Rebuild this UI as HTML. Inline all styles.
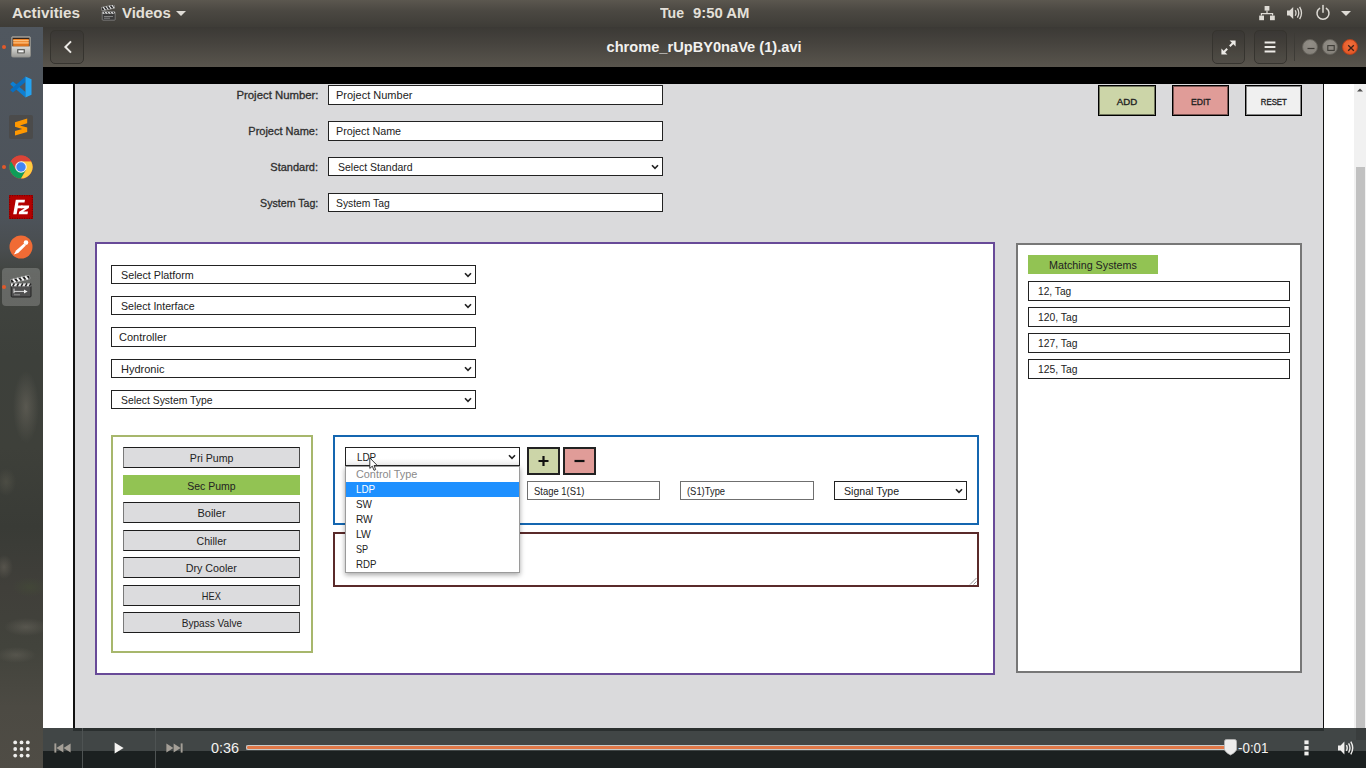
<!DOCTYPE html>
<html><head><meta charset="utf-8"><title>Videos</title>
<style>
*{box-sizing:border-box;margin:0;padding:0}
html,body{width:1366px;height:768px;overflow:hidden;background:#000;font-family:"Liberation Sans",sans-serif}
.abs{position:absolute}
.t{display:inline-block;white-space:nowrap}
#topbar{position:absolute;left:0;top:0;width:1366px;height:27px;background:linear-gradient(#5b574f,#4b4842 40%,#3e3c37);color:#e4e0d9;font-weight:bold;font-size:14.5px}
#topbar .tx{position:absolute;top:5px;white-space:nowrap}
#topbar svg,#header svg,#dock svg,#ctrl svg{position:absolute;display:block}
#dock{position:absolute;left:0;top:27px;width:43px;height:741px;background:
radial-gradient(ellipse 13px 36px at 26px 380px,rgba(112,108,98,.55),rgba(112,108,98,0) 100%),
radial-gradient(ellipse 9px 12px at 4px 540px,rgba(110,105,95,.5),rgba(110,105,95,0) 100%),
radial-gradient(ellipse 10px 14px at 6px 455px,rgba(100,98,85,.4),rgba(100,98,85,0) 100%),
radial-gradient(ellipse 22px 9px at 26px 600px,rgba(120,116,106,.4),rgba(120,116,106,0) 100%),
radial-gradient(ellipse 20px 8px at 16px 628px,rgba(120,116,106,.35),rgba(120,116,106,0) 100%),
radial-gradient(ellipse 18px 10px at 30px 560px,rgba(70,84,52,.35),rgba(70,84,52,0) 100%),
linear-gradient(#50575f 0,#4d535a 190px,#494d4f 222px,#414440 246px,#3d403b 330px,#3e403a 420px,#393b36 500px,#403f3a 560px,#42433c 620px,#4c4a43 680px,#4f4c45 741px)}
#header{position:absolute;left:43px;top:27px;width:1323px;height:40px;background:linear-gradient(#3b3935,#46433e 40%,#59554d);color:#f2f1ef}
#title{position:absolute;left:0;width:1323px;top:11px;text-align:center;font-weight:bold;font-size:15px}
.hbtn{position:absolute;top:3px;width:33px;height:34px;border:1px solid #36342f;border-radius:5px;background:rgba(0,0,0,.05)}
.wb{position:absolute;top:12px;width:16px;height:16px;border-radius:50%;background:radial-gradient(circle at 50% 30%,#928e87,#827e77);border:1px solid #66635c}
.dot{position:absolute;left:2px;width:4px;height:4px;border-radius:50%;background:#e2592a}
#video{position:absolute;left:43px;top:67px;width:1323px;height:701px;background:#000;overflow:hidden}
#page{position:absolute;left:0;top:17px;width:1311px;height:684px;background:#fff}
#gray{position:absolute;left:30px;top:0;width:1251px;height:646px;background:#dadadc;border:2px solid #111;border-top:none;border-right-width:1px}
#sb{position:absolute;left:1311px;top:17px;width:12px;height:684px;background:#f1f1f1}
#sbthumb{position:absolute;left:2px;top:83px;width:9px;height:600px;background:#c1c1c1}
.app{font-family:"Liberation Sans",sans-serif;font-size:11px;color:#222}
.lbl{position:absolute;width:200px;text-align:right;font-size:11px;color:#2e2e2e;-webkit-text-stroke:.3px #2e2e2e}
.inp{position:absolute;background:#fff;border:1px solid #222;font-size:11px;color:#222;padding-left:7px;white-space:nowrap;overflow:hidden}
.sel{padding-left:9px}
.lt{border-color:#6f6f6f;padding-left:6px}
.chev{position:absolute;right:3px;top:50%;margin-top:-3px;width:8px;height:6px}
.btn{position:absolute;border:1px solid #333;border-color:#1c1c1c #4a4a4a #1c1c1c #7a7a7a;background:#dcdcde;text-align:center;font-size:11px;color:#222}
#ctrl{position:absolute;left:0;top:661px;width:1323px;height:40px;background:#1b2020}
.ctx{font-size:15px;color:#f4f3f1;white-space:nowrap;line-height:20px}
.opt{height:15px;line-height:15px;padding-left:10px}
.ms{padding-left:9px}
#ctrl .top{position:absolute;left:0;top:0;width:1323px;height:23px;background:#414646}
</style></head>
<body>
<div id="topbar">
 <div class="tx" style="left:12px"><span class="t" style="transform:scaleX(1.055);transform-origin:0 50%">Activities</span></div>
 <svg style="left:101px;top:5px" width="15" height="16" viewBox="0 0 15 16">
  <g transform="rotate(-12 2 6)"><rect x="1" y="2.2" width="13" height="3.4" fill="#2b2b2b" stroke="#bdbdbd" stroke-width=".5"/><path d="M3 2.2l1.5 3.4M6 2.2l1.5 3.4M9 2.2l1.5 3.4M12 2.2l1.5 3.4" stroke="#e8e8e8" stroke-width="1.1"/></g>
  <rect x="1.2" y="6.6" width="13" height="8.6" rx=".8" fill="#3a3a3a" stroke="#9a9a9a" stroke-width=".6"/>
  <rect x="1.5" y="6.9" width="12.4" height="2" fill="#d0d0d0"/><path d="M3 6.9l1.3 2M6 6.9l1.3 2M9 6.9l1.3 2M12 6.9l1.3 2" stroke="#333" stroke-width="1"/>
  <path d="M3 11.5h9M3 13.2h6" stroke="#8a8a8a" stroke-width=".9"/>
 </svg>
 <div class="tx" style="left:122px"><span class="t" style="transform:scaleX(1.030);transform-origin:0 50%">Videos</span></div>
 <svg style="left:176px;top:11px" width="10" height="5" viewBox="0 0 10 5"><path d="M0 0h10L5 5z" fill="#dedbd5"/></svg>
 <div class="tx" style="left:660px"><span class="t" style="transform:scaleX(0.972);transform-origin:0 50%">Tue</span></div>
 <div class="tx" style="left:693px"><span class="t" style="transform:scaleX(1.026);transform-origin:0 50%">9:50 AM</span></div>
 <svg style="left:1259px;top:5px" width="16" height="17" viewBox="0 0 16 17" fill="#dedbd5"><rect x="5.6" y="1" width="4.8" height="4.6"/><rect x=".2" y="10.6" width="4.8" height="4.6"/><rect x="11" y="10.6" width="4.8" height="4.6"/><path d="M7.4 5.6h1.2v2.4h5.6v2.6H13V9.2H3v1.4H1.8V8h5.6z"/></svg>
 <svg style="left:1286px;top:5px" width="17" height="16" viewBox="0 0 17 16"><path d="M1 5.6h2.6L7.2 2v12L3.6 10.4H1z" fill="#dedbd5"/><path d="M9.2 5.2q1.6 2.8 0 5.6M11.4 3.4q2.8 4.6 0 9.2M13.6 1.8q3.8 6.2 0 12.4" fill="none" stroke="#dedbd5" stroke-width="1.3"/></svg>
 <svg style="left:1315px;top:4px" width="16" height="17" viewBox="0 0 16 17" fill="none" stroke="#dedbd5" stroke-width="1.5" stroke-linecap="round"><path d="M4.6 4.4a6 6 0 1 0 6.8 0"/><path d="M8 1.6v6.6"/></svg>
 <svg style="left:1341px;top:11px" width="10" height="5" viewBox="0 0 10 5"><path d="M0 0h10L5 5z" fill="#dedbd5"/></svg>
</div>
<div id="dock">
 <div class="abs" style="left:2px;top:241px;width:38px;height:38px;border-radius:4px;background:rgba(255,255,255,.2)"></div>
 <div class="dot" style="top:18px"></div><div class="dot" style="top:138px"></div><div class="dot" style="top:258px"></div>
 <!-- files -->
 <svg style="left:11px;top:9px" width="20" height="22" viewBox="0 0 20 22"><defs><linearGradient id="fg" x1="0" y1="0" x2="0" y2="1"><stop offset="0" stop-color="#dcdcd9"/><stop offset="1" stop-color="#9c9c98"/></linearGradient></defs><rect x=".5" y=".5" width="19" height="20.500" rx="1.600" fill="url(#fg)" stroke="#8e8e8a"/><rect x="1.400" y="1.500" width="17.200" height="9" fill="#33241a"/><rect x="2.200" y="3" width="15.600" height="7.500" fill="#ef8427"/><path d="M2.200 4.700h15.600M2.200 6.900h15.600" stroke="#ffd6a2" stroke-width=".9"/><path d="M2.200 9h15.600" stroke="#c45f12" stroke-width=".8"/><rect x="1" y="10.600" width="18" height="10" fill="url(#fg)"/><rect x="6" y="13" width="8" height="4.600" rx=".8" fill="#63635f"/><rect x="7.400" y="14.300" width="5.200" height="2" fill="#f6f6f6"/></svg>
 <!-- vscode -->
 <svg style="left:10px;top:49px" width="22" height="22" viewBox="0 0 22 22"><path d="M15.500 21.500L15.500 16L2.900 5.600L.5 7.600L.5 8.400z" fill="#0d7fd3"/><path d="M15.500.5L15.500 6L2.900 16.400L.5 14.400L.5 13.600z" fill="#0a6fc0"/><path d="M15.500.5L21.500 3.300V18.700L15.500 21.500z" fill="#25a3f1"/></svg>
 <!-- sublime -->
 <svg style="left:9px;top:88px" width="24" height="24" viewBox="0 0 24 24"><rect width="24" height="24" rx="2" fill="#4b4b4b"/><path d="M6 8.200L18.200 4.600v4.600L11 11.400l7.200 2.100v4.600L6 21.600v-4.600l7.200-2.100L6 12.800z" fill="#ff9800" transform="translate(0 -1)"/></svg>
 <!-- chrome -->
 <svg style="left:9px;top:128px" width="24" height="24" viewBox="0 0 24 24"><circle cx="12" cy="12" r="11.6" fill="#db4437"/><path d="M12 12L1.95 6.2A11.6 11.6 0 0 0 12 23.6L17 15z" fill="#0f9d58"/><path d="M12 12l5 3l-5 8.600A11.6 11.6 0 0 0 22.050 6.200H12z" fill="#ffcd40"/><path d="M12 6.2h10.050A11.6 11.6 0 0 0 1.950 6.200L7 15z" fill="#db4437"/><circle cx="12" cy="12" r="5.800" fill="#f1f1f1"/><circle cx="12" cy="12" r="4.700" fill="#4285f4"/></svg>
 <!-- filezilla -->
 <svg style="left:9px;top:168px" width="24" height="24" viewBox="0 0 24 24"><rect width="24" height="24" fill="#b30000"/><rect x=".6" y=".6" width="22.800" height="22.800" fill="none" stroke="#7c0000" stroke-width="1.200" stroke-dasharray="1.200 1.200"/><path d="M4.200 19.200L6.800 4.800h9.200l-.5 2.800h-6l-.5 3h4.600l-.5 2.700H8.700l-1.100 5.900z" fill="#fff"/><path d="M12.200 10.600h8l-.4 2.400l-5.600 3.600h4.800l-.5 2.600h-8.800l.4-2.400l5.600-3.600h-4z" fill="#fff"/></svg>
 <!-- postman -->
 <svg style="left:9px;top:208px" width="24" height="24" viewBox="0 0 24 24"><circle cx="12" cy="12" r="11.500" fill="#f06b35"/><path d="M5.400 19.200l1.400-3.400L15 8.600l1.800 1.800l-7.600 7.600z" fill="#fff"/><circle cx="17" cy="7.600" r="2.300" fill="#fff"/><path d="M5 19.600l1.200-2l.9.900z" fill="#fff"/></svg>
 <!-- totem -->
 <svg style="left:10px;top:247px" width="22" height="24" viewBox="0 0 22 24"><g transform="rotate(-13 2 10)"><rect x="1.400" y="5.400" width="19.400" height="3.600" rx=".6" fill="#1e1e1e" stroke="#d8d8d8" stroke-width=".5"/><path d="M4 5.400l1.800 3.600M8.200 5.400l1.800 3.600M12.400 5.400l1.800 3.600M16.600 5.400l1.800 3.600" stroke="#f4f4f4" stroke-width="2"/></g><rect x="1.200" y="9.600" width="19.800" height="13.400" rx="1" fill="#505050" stroke="#1c1c1c" stroke-width=".9"/><rect x="1" y="9.300" width="20.200" height="3" fill="#ececec"/><path d="M4.400 9.300l-1.600 3M8.600 9.300l-1.600 3M12.800 9.300l-1.600 3M17 9.300l-1.600 3M21 9.300l-1.600 3" stroke="#262626" stroke-width="1.600"/><path d="M4 14.600v4.600M4 17.400h11" stroke="#dcdcdc" stroke-width="1"/><path d="M4 20.800h6" stroke="#9a9a9a" stroke-width=".9"/><path d="M14 15.400l3.600 2L14 19.400z" fill="#f0f0f0"/></svg>
 <!-- apps grid -->
 <svg style="left:13px;top:713px" width="17" height="18" viewBox="0 0 17 18" fill="#eeeeec"><circle cx="2.200" cy="2.400" r="1.900"/><circle cx="8.500" cy="2.400" r="1.900"/><circle cx="14.800" cy="2.400" r="1.900"/><circle cx="2.200" cy="9" r="1.900"/><circle cx="8.500" cy="9" r="1.900"/><circle cx="14.800" cy="9" r="1.900"/><circle cx="2.200" cy="15.600" r="1.900"/><circle cx="8.500" cy="15.600" r="1.900"/><circle cx="14.800" cy="15.600" r="1.900"/></svg>
</div>
<div id="header">
 <div class="hbtn" style="left:7px;width:34px"></div>
 <svg style="left:20px;top:13px" width="10" height="14" viewBox="0 0 10 14"><path d="M8 1.400L2.400 7L8 12.600" fill="none" stroke="#eceae6" stroke-width="2"/></svg>
 <div id="title"><span class="t" style="transform:scaleX(0.975);transform-origin:50% 50%">chrome_rUpBY0naVe (1).avi</span></div>
 <div class="hbtn" style="left:1169px"></div>
 <svg style="left:1178px;top:13px" width="15" height="15" viewBox="0 0 15 15"><path d="M14.600.4v6L8.600.4zM.4 14.600v-6l6 6z" fill="#eceae6"/><path d="M12 3L8.800 6.200M3 12l3.200-3.200" stroke="#eceae6" stroke-width="2"/></svg>
 <div class="hbtn" style="left:1211px"></div>
 <svg style="left:1221px;top:14px" width="12" height="12" viewBox="0 0 12 12"><path d="M.6 1.600h10.800M.6 6h10.800M.6 10.400h10.800" stroke="#eceae6" stroke-width="2"/></svg>
 <div class="abs" style="left:1251px;top:6px;width:1px;height:28px;background:#3d3b36"></div>
 <div class="wb" style="left:1259px"><svg style="left:4px;top:4px" width="8" height="8" viewBox="0 0 8 8"><path d="M.5 4.500h7" stroke="#3d3b36" stroke-width="1.200"/></svg></div>
 <div class="wb" style="left:1279px"><svg style="left:4px;top:4px" width="8" height="8" viewBox="0 0 8 8"><rect x=".8" y="1.600" width="6.400" height="4.800" fill="none" stroke="#3d3b36" stroke-width="1.100"/></svg></div>
 <div class="wb" style="left:1299px;background:radial-gradient(circle at 50% 35%,#f0703c,#e14f1f);border-color:#b8431c"><svg style="left:4px;top:4px" width="8" height="8" viewBox="0 0 8 8"><path d="M1.200 1.200l5.600 5.600M6.800 1.200L1.200 6.800" stroke="#3b2018" stroke-width="1.300"/></svg></div>
</div>
<div id="video">
 <div id="page" class="app">
  <div id="gray"></div>
  <div id="c" style="position:absolute;left:-43px;top:-84px;width:1366px;height:768px">
   <div class="lbl" style="left:118px;top:89px"><span class="t" style="transform:scaleX(1.032);transform-origin:100% 50%">Project Number:</span></div>
   <div class="inp" style="left:328px;top:85px;width:335px;height:20px;line-height:18px"><span class="t">Project Number</span></div>
   <div class="lbl" style="left:118px;top:125px"><span class="t">Project Name:</span></div>
   <div class="inp" style="left:328px;top:121px;width:335px;height:20px;line-height:18px"><span class="t" style="transform:scaleX(0.977);transform-origin:0 50%">Project Name</span></div>
   <div class="lbl" style="left:118px;top:161px"><span class="t">Standard:</span></div>
   <div class="inp sel" style="left:328px;top:157px;width:335px;height:19px;line-height:18px"><span class="t" style="transform:scaleX(0.954);transform-origin:0 50%">Select Standard</span><svg class="chev" viewBox="0 0 8 6"><path d="M1 1.2 L4 4.4 L7 1.2" fill="none" stroke="#222" stroke-width="1.6"/></svg></div>
   <div class="lbl" style="left:118px;top:197px"><span class="t" style="transform:scaleX(0.965);transform-origin:100% 50%">System Tag:</span></div>
   <div class="inp" style="left:328px;top:193px;width:335px;height:19px;line-height:18px"><span class="t" style="transform:scaleX(0.939);transform-origin:0 50%">System Tag</span></div>

   <div class="btn" style="left:1098px;top:85px;width:58px;height:31px;line-height:32px;background:#ccd5a8;font-size:9.5px;-webkit-text-stroke:.35px #222;border:1px solid #000;box-shadow:inset 0 0 0 1px rgba(0,0,0,.45)"><span class="t" style="transform:scaleX(1.017);transform-origin:50% 50%">ADD</span></div>
   <div class="btn" style="left:1172px;top:85px;width:57px;height:31px;line-height:32px;background:#e09c98;font-size:9.5px;-webkit-text-stroke:.35px #222;border:1px solid #000;box-shadow:inset 0 0 0 1px rgba(0,0,0,.45)"><span class="t" style="transform:scaleX(0.906);transform-origin:50% 50%">EDIT</span></div>
   <div class="btn" style="left:1245px;top:85px;width:57px;height:31px;line-height:32px;background:#f0f0f0;font-size:9.5px;-webkit-text-stroke:.35px #222;border:1px solid #000;box-shadow:inset 0 0 0 1px rgba(0,0,0,.45)"><span class="t" style="transform:scaleX(0.821);transform-origin:50% 50%">RESET</span></div>

   <div class="abs" style="left:95px;top:242px;width:900px;height:433px;background:#fff;border:2px solid #684a98"></div>
   <div class="inp sel" style="left:111px;top:265px;width:365px;height:19px;line-height:18px"><span class="t" style="transform:scaleX(0.976);transform-origin:0 50%">Select Platform</span><svg class="chev" viewBox="0 0 8 6"><path d="M1 1.2 L4 4.4 L7 1.2" fill="none" stroke="#222" stroke-width="1.6"/></svg></div>
   <div class="inp sel" style="left:111px;top:296px;width:365px;height:19px;line-height:18px"><span class="t" style="transform:scaleX(0.963);transform-origin:0 50%">Select Interface</span><svg class="chev" viewBox="0 0 8 6"><path d="M1 1.2 L4 4.4 L7 1.2" fill="none" stroke="#222" stroke-width="1.6"/></svg></div>
   <div class="inp" style="left:111px;top:327px;width:365px;height:20px;line-height:18px"><span class="t">Controller</span></div>
   <div class="inp sel" style="left:111px;top:359px;width:365px;height:19px;line-height:18px"><span class="t">Hydronic</span><svg class="chev" viewBox="0 0 8 6"><path d="M1 1.2 L4 4.4 L7 1.2" fill="none" stroke="#222" stroke-width="1.6"/></svg></div>
   <div class="inp sel" style="left:111px;top:390px;width:365px;height:19px;line-height:18px"><span class="t" style="transform:scaleX(0.943);transform-origin:0 50%">Select System Type</span><svg class="chev" viewBox="0 0 8 6"><path d="M1 1.2 L4 4.4 L7 1.2" fill="none" stroke="#222" stroke-width="1.6"/></svg></div>

   <div class="abs" style="left:111px;top:435px;width:202px;height:218px;border:2px solid #a7b76c;background:#fff"></div>
   <div class="btn eq" style="left:123px;top:447px;width:177px;height:21px;line-height:20px"><span class="t" style="transform:scaleX(0.964);transform-origin:50% 50%">Pri Pump</span></div>
   <div class="btn eq" style="left:123px;top:475px;width:177px;height:20px;line-height:20px;background:#92c353;border-color:#92c353"><span class="t" style="transform:scaleX(0.952);transform-origin:50% 50%">Sec Pump</span></div>
   <div class="btn eq" style="left:123px;top:502px;width:177px;height:21px;line-height:20px"><span class="t">Boiler</span></div>
   <div class="btn eq" style="left:123px;top:530px;width:177px;height:21px;line-height:20px"><span class="t" style="transform:scaleX(0.962);transform-origin:50% 50%">Chiller</span></div>
   <div class="btn eq" style="left:123px;top:557px;width:177px;height:21px;line-height:20px"><span class="t" style="transform:scaleX(0.974);transform-origin:50% 50%">Dry Cooler</span></div>
   <div class="btn eq" style="left:123px;top:585px;width:177px;height:21px;line-height:20px"><span class="t" style="transform:scaleX(0.840);transform-origin:50% 50%">HEX</span></div>
   <div class="btn eq" style="left:123px;top:612px;width:177px;height:21px;line-height:20px"><span class="t" style="transform:scaleX(0.918);transform-origin:50% 50%">Bypass Valve</span></div>

   <div class="abs" style="left:333px;top:435px;width:646px;height:90px;border:2px solid #1466b0;background:#fff"></div>
   <div class="inp sel" style="left:345px;top:447px;width:175px;height:19px;line-height:18px;padding-left:11px;background:linear-gradient(#fff 60%,#efefef)"><span class="t" style="transform:scaleX(0.897);transform-origin:0 50%">LDP</span><svg class="chev" viewBox="0 0 8 6"><path d="M1 1.2 L4 4.4 L7 1.2" fill="none" stroke="#222" stroke-width="1.6"/></svg></div>
   <div class="btn" style="left:527px;top:447px;width:33px;height:28px;background:#ccd5a8;border-width:2px;border-color:#222"><svg width="29" height="24" viewBox="0 1 29 24"><path d="M9.5 13h10M14.5 8v10" stroke="#111" stroke-width="2.2"/></svg></div>
   <div class="btn" style="left:563px;top:447px;width:33px;height:28px;background:#e09c98;border-width:2px;border-color:#222"><svg width="29" height="24" viewBox="0 1 29 24"><path d="M9.5 13h10" stroke="#111" stroke-width="2.2"/></svg></div>
   <div class="inp lt" style="left:527px;top:481px;width:133px;height:19px;line-height:18px"><span class="t" style="transform:scaleX(0.857);transform-origin:0 50%">Stage 1(S1)</span></div>
   <div class="inp lt" style="left:680px;top:481px;width:134px;height:19px;line-height:18px"><span class="t" style="transform:scaleX(0.853);transform-origin:0 50%">(S1)Type</span></div>
   <div class="inp sel" style="left:834px;top:481px;width:133px;height:19px;line-height:18px"><span class="t" style="transform:scaleX(0.962);transform-origin:0 50%">Signal Type</span><svg class="chev" viewBox="0 0 8 6"><path d="M1 1.2 L4 4.4 L7 1.2" fill="none" stroke="#222" stroke-width="1.6"/></svg></div>

   <div class="abs" style="left:333px;top:532px;width:646px;height:55px;border:2px solid #5a2a2a;background:#fff"></div>
   <svg class="abs" style="left:969px;top:577px" width="8" height="8" viewBox="0 0 8 8"><path d="M7.500 1L1 7.500M7.500 4.500L4.500 7.500" stroke="#8a8a8a" stroke-width=".9"/></svg>

   <div class="abs" id="dd" style="left:345px;top:466px;width:175px;height:107px;background:#fff;border:1px solid #9a9a9a;box-shadow:0 2px 5px rgba(0,0,0,.35);font-size:11px;color:#222">
    <div class="opt" style="color:#8a8a8a"><span class="t" style="transform:scaleX(0.986);transform-origin:0 50%">Control Type</span></div>
    <div class="opt" style="background:#1e90ff;color:#fff"><span class="t" style="transform:scaleX(0.897);transform-origin:0 50%">LDP</span></div>
    <div class="opt"><span class="t" style="transform:scaleX(0.902);transform-origin:0 50%">SW</span></div>
    <div class="opt"><span class="t" style="transform:scaleX(0.915);transform-origin:0 50%">RW</span></div>
    <div class="opt"><span class="t" style="transform:scaleX(0.943);transform-origin:0 50%">LW</span></div>
    <div class="opt"><span class="t" style="transform:scaleX(0.831);transform-origin:0 50%">SP</span></div>
    <div class="opt"><span class="t" style="transform:scaleX(0.878);transform-origin:0 50%">RDP</span></div>
   </div>

   <svg class="abs" style="left:369px;top:457px" width="10" height="15" viewBox="0 0 10 15"><path d="M.8.900V11.400L3.300 9.200L5 13.300L6.700 12.600L5 8.600H8.400z" fill="#fff" stroke="#222" stroke-width=".9" stroke-linejoin="round"/></svg>
   <div class="abs" style="left:1016px;top:243px;width:286px;height:430px;border:2px solid #777;background:#fff"></div>
   <div class="abs" style="left:1028px;top:255px;width:130px;height:19px;line-height:21px;background:#92c353;text-align:center;font-size:11px;color:#222"><span class="t" style="transform:scaleX(0.975);transform-origin:50% 50%">Matching Systems</span></div>
   <div class="inp ms" style="left:1028px;top:281px;width:262px;height:20px;line-height:18px"><span class="t" style="transform:scaleX(0.925);transform-origin:0 50%">12, Tag</span></div>
   <div class="inp ms" style="left:1028px;top:307px;width:262px;height:20px;line-height:18px"><span class="t" style="transform:scaleX(0.938);transform-origin:0 50%">120, Tag</span></div>
   <div class="inp ms" style="left:1028px;top:333px;width:262px;height:20px;line-height:18px"><span class="t" style="transform:scaleX(0.938);transform-origin:0 50%">127, Tag</span></div>
   <div class="inp ms" style="left:1028px;top:359px;width:262px;height:20px;line-height:18px"><span class="t" style="transform:scaleX(0.938);transform-origin:0 50%">125, Tag</span></div>
  </div>
 </div>
 <div id="sb"><div id="sbthumb"></div><svg style="position:absolute;left:3px;top:4px" width="6" height="4" viewBox="0 0 6 4"><path d="M0 3.600L3 .4L6 3.600z" fill="#505050"/></svg></div>
 <div id="ctrl"><div class="top"></div>
  <div class="abs" style="left:1313px;top:0;width:10px;height:12px;background:rgba(0,0,0,.12)"></div>
  <div class="abs" style="left:30px;top:0;width:1251px;height:3px;background:#2a2f2f"></div>
  <div class="abs" style="left:39px;top:0;width:1px;height:40px;background:#4e5353"></div>
  <div class="abs" style="left:112px;top:0;width:1px;height:40px;background:#4e5353"></div>
  <svg style="left:11px;top:15px" width="17" height="10" viewBox="0 0 17 10" fill="#a49f97"><rect x=".4" y=".4" width="1.900" height="9.200"/><path d="M9.400.4v9.200L2.400 5z"/><path d="M16.600.4v9.200L9.600 5z"/></svg>
  <svg style="left:71px;top:14px" width="10" height="12" viewBox="0 0 10 12"><path d="M.6.6L9.600 6L.6 11.400z" fill="#f4f3f1"/></svg>
  <svg style="left:123px;top:15px" width="17" height="10" viewBox="0 0 17 10" fill="#a49f97"><rect x="14.700" y=".4" width="1.900" height="9.200"/><path d="M.4.4v9.200L7.400 5z"/><path d="M7.600.4v9.200L14.600 5z"/></svg>
  <div class="abs ctx" style="left:168px;top:10px"><span class="t" style="transform:scaleX(0.959);transform-origin:0 50%">0:36</span></div>
  <div class="abs" style="left:203px;top:17px;width:985px;height:5px;border-radius:2px;background:#e07848;border:1px solid #c8cbcb;border-right:none"></div>
  <svg style="left:1181px;top:11px" width="13" height="17" viewBox="0 0 13 17"><path d="M2.400.5h8.200q1.900 0 1.900 1.900v8.200Q12.500 12 9.500 14.200L6.500 16L3.500 14.200Q.5 12 .5 10.600V2.400Q.5.500 2.400.5z" fill="#ececec" stroke="#b5b5b5" stroke-width=".8"/></svg>
  <div class="abs ctx" style="left:1195px;top:10px"><span class="t" style="transform:scaleX(0.892);transform-origin:0 50%">-0:01</span></div>
  <svg style="left:1261px;top:12px" width="5" height="16" viewBox="0 0 5 16" fill="#f0efed"><rect x=".4" y=".4" width="4.200" height="3.800"/><rect x=".4" y="6" width="4.200" height="3.800"/><rect x=".4" y="11.600" width="4.200" height="3.800"/></svg>
  <svg style="left:1294px;top:12px" width="17" height="16" viewBox="0 0 17 16"><path d="M1 5.400h2.600L7.400 1.600v12.800L3.600 10.600H1z" fill="#f0efed"/><path d="M9.400 5.200q1.600 2.800 0 5.600M11.600 3.400q2.800 4.600 0 9.200M13.800 1.600q3.800 6.400 0 12.800" fill="none" stroke="#f0efed" stroke-width="1.400"/></svg>
 </div>
</div>
</body></html>
